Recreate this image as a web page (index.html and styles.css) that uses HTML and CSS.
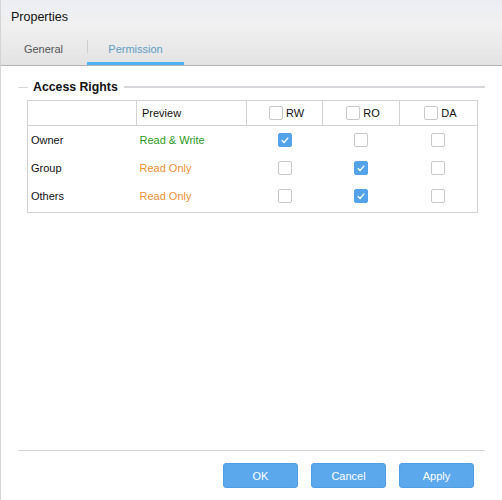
FILE: index.html
```html
<!DOCTYPE html>
<html lang="en">
<head>
    <meta charset="UTF-8">
    <title>Properties</title>
    <link rel="stylesheet" href="styles.css">
</head>
<body>
    <div class="dialog">
        <div class="dialog-header">
            <div class="dialog-title">Properties</div>
            <div class="tabs">
                <div class="tab">General</div>
                <div class="tab active">Permission</div>
            </div>
        </div>

        <div class="dialog-body">
            <div class="group-title">
                <span class="group-line short"></span>
                <span class="group-label">Access Rights</span>
                <span class="group-line"></span>
            </div>

            <table class="rights">
                <colgroup>
                    <col class="col-name">
                    <col class="col-preview">
                    <col class="col-rw">
                    <col class="col-ro">
                    <col>
                </colgroup>
                <thead>
                    <tr>
                        <th></th>
                        <th class="preview">Preview</th>
                        <th><label class="head-check"><span class="box"></span>RW</label></th>
                        <th><label class="head-check"><span class="box"></span>RO</label></th>
                        <th><label class="head-check"><span class="box"></span>DA</label></th>
                    </tr>
                </thead>
                <tbody>
                    <tr>
                        <td>Owner</td>
                        <td class="rw">Read &amp; Write</td>
                        <td class="check"><span class="box checked"><svg viewBox="0 0 13 13"><polyline points="3,6.8 5.5,9.2 10,4"/></svg></span></td>
                        <td class="check"><span class="box"></span></td>
                        <td class="check"><span class="box"></span></td>
                    </tr>
                    <tr>
                        <td>Group</td>
                        <td class="ro">Read Only</td>
                        <td class="check"><span class="box"></span></td>
                        <td class="check"><span class="box checked"><svg viewBox="0 0 13 13"><polyline points="3,6.8 5.5,9.2 10,4"/></svg></span></td>
                        <td class="check"><span class="box"></span></td>
                    </tr>
                    <tr>
                        <td>Others</td>
                        <td class="ro">Read Only</td>
                        <td class="check"><span class="box"></span></td>
                        <td class="check"><span class="box checked"><svg viewBox="0 0 13 13"><polyline points="3,6.8 5.5,9.2 10,4"/></svg></span></td>
                        <td class="check"><span class="box"></span></td>
                    </tr>
                </tbody>
            </table>
        </div>

        <div class="dialog-footer">
            <button class="btn">OK</button>
            <button class="btn">Cancel</button>
            <button class="btn">Apply</button>
        </div>
    </div>
</body>
</html>
```

FILE: styles.css
```css
* {
    margin: 0;
    padding: 0;
    box-sizing: border-box;
    font-family: "Liberation Sans", Arial, sans-serif;
}

body {
    background: #fff;
}

.dialog {
    height: 500px;
    display: flex;
    flex-direction: column;
    border-left: 1px solid #d4d4d4;
}

/* title bar + tabs */
.dialog-header {
    height: 66px;
    background: linear-gradient(#eceef3, #f0f0f0 40%, #e3e3e3);
    border-bottom: 1px solid #b4b4b4;
    display: flex;
    flex-direction: column;
    justify-content: space-between;
}

.dialog-title {
    padding: 10px 0 0 10px;
    font-size: 12.5px;
    color: #111;
}

.tabs {
    display: flex;
    margin-left: -1px;
}

.tab {
    position: relative;
    width: 87px;
    height: 27px;
    padding-top: 5px;
    text-align: center;
    font-size: 11px;
    color: #555;
}

.tab + .tab::before {
    content: "";
    position: absolute;
    left: 0;
    top: 2px;
    height: 13px;
    border-left: 1px solid #cfcfcf;
}

.tab.active {
    width: 97px;
    color: #5d9cc2;
    border-bottom: 3px solid #4db2f2;
}

/* fieldset */
.dialog-body {
    flex: 1;
    padding: 14px 17px 0;
}

.group-title {
    display: flex;
    align-items: center;
    height: 14px;
}

.group-line {
    flex: 1;
    border-top: 2px solid #d8d8dc;
}

.group-line.short {
    flex: 0 0 10px;
    border-top-width: 1px;
}

.group-label {
    padding: 0 6px 0 5px;
    font-size: 12.3px;
    font-weight: bold;
    color: #111;
}

/* rights table */
.rights {
    margin: 6px 0 0 9px;
    width: 451px;
    table-layout: fixed;
    border: 1px solid #d2d2d2;
    border-collapse: collapse;
    font-size: 11px;
    color: #111;
}

.col-name {
    width: 109px;
}

.col-preview {
    width: 110px;
}

.col-rw {
    width: 76px;
}

.col-ro {
    width: 77px;
}

.rights th {
    height: 25px;
    font-weight: normal;
    text-align: left;
    border: 1px solid #d2d2d2;
    padding: 0 5px;
}

.rights td {
    height: 28px;
    padding: 0 3px;
}

.rights tbody tr:last-child td {
    height: 31px;
    padding-bottom: 2px;
}

.rights .rw {
    color: #2a9a1c;
    padding-left: 3px;
}

.rights .ro {
    color: #f09030;
    padding-left: 3px;
}

.rights td.check {
    text-align: center;
}

.head-check {
    display: flex;
    align-items: center;
    justify-content: center;
    gap: 3px;
    padding-left: 4px;
}

.box {
    display: inline-block;
    width: 14px;
    height: 14px;
    border: 1px solid #c9c9c9;
    border-radius: 2px;
    background: #fff;
    vertical-align: middle;
}

.box.checked {
    background: #54a3ea;
    border-color: #54a3ea;
}

.box svg {
    display: block;
    width: 12px;
    height: 12px;
    fill: none;
    stroke: #fff;
    stroke-width: 1.4;
}

/* buttons */
.dialog-footer {
    margin: 0 17px;
    border-top: 1px solid #d4d4d4;
    padding: 12px 11px 12px 0;
    display: flex;
    justify-content: flex-end;
    gap: 13px;
}

.btn {
    width: 75px;
    height: 25px;
    background: #5ba8ec;
    border: 1px solid #509ee4;
    border-radius: 3px;
    color: #fff;
    font-size: 11px;
}
```
